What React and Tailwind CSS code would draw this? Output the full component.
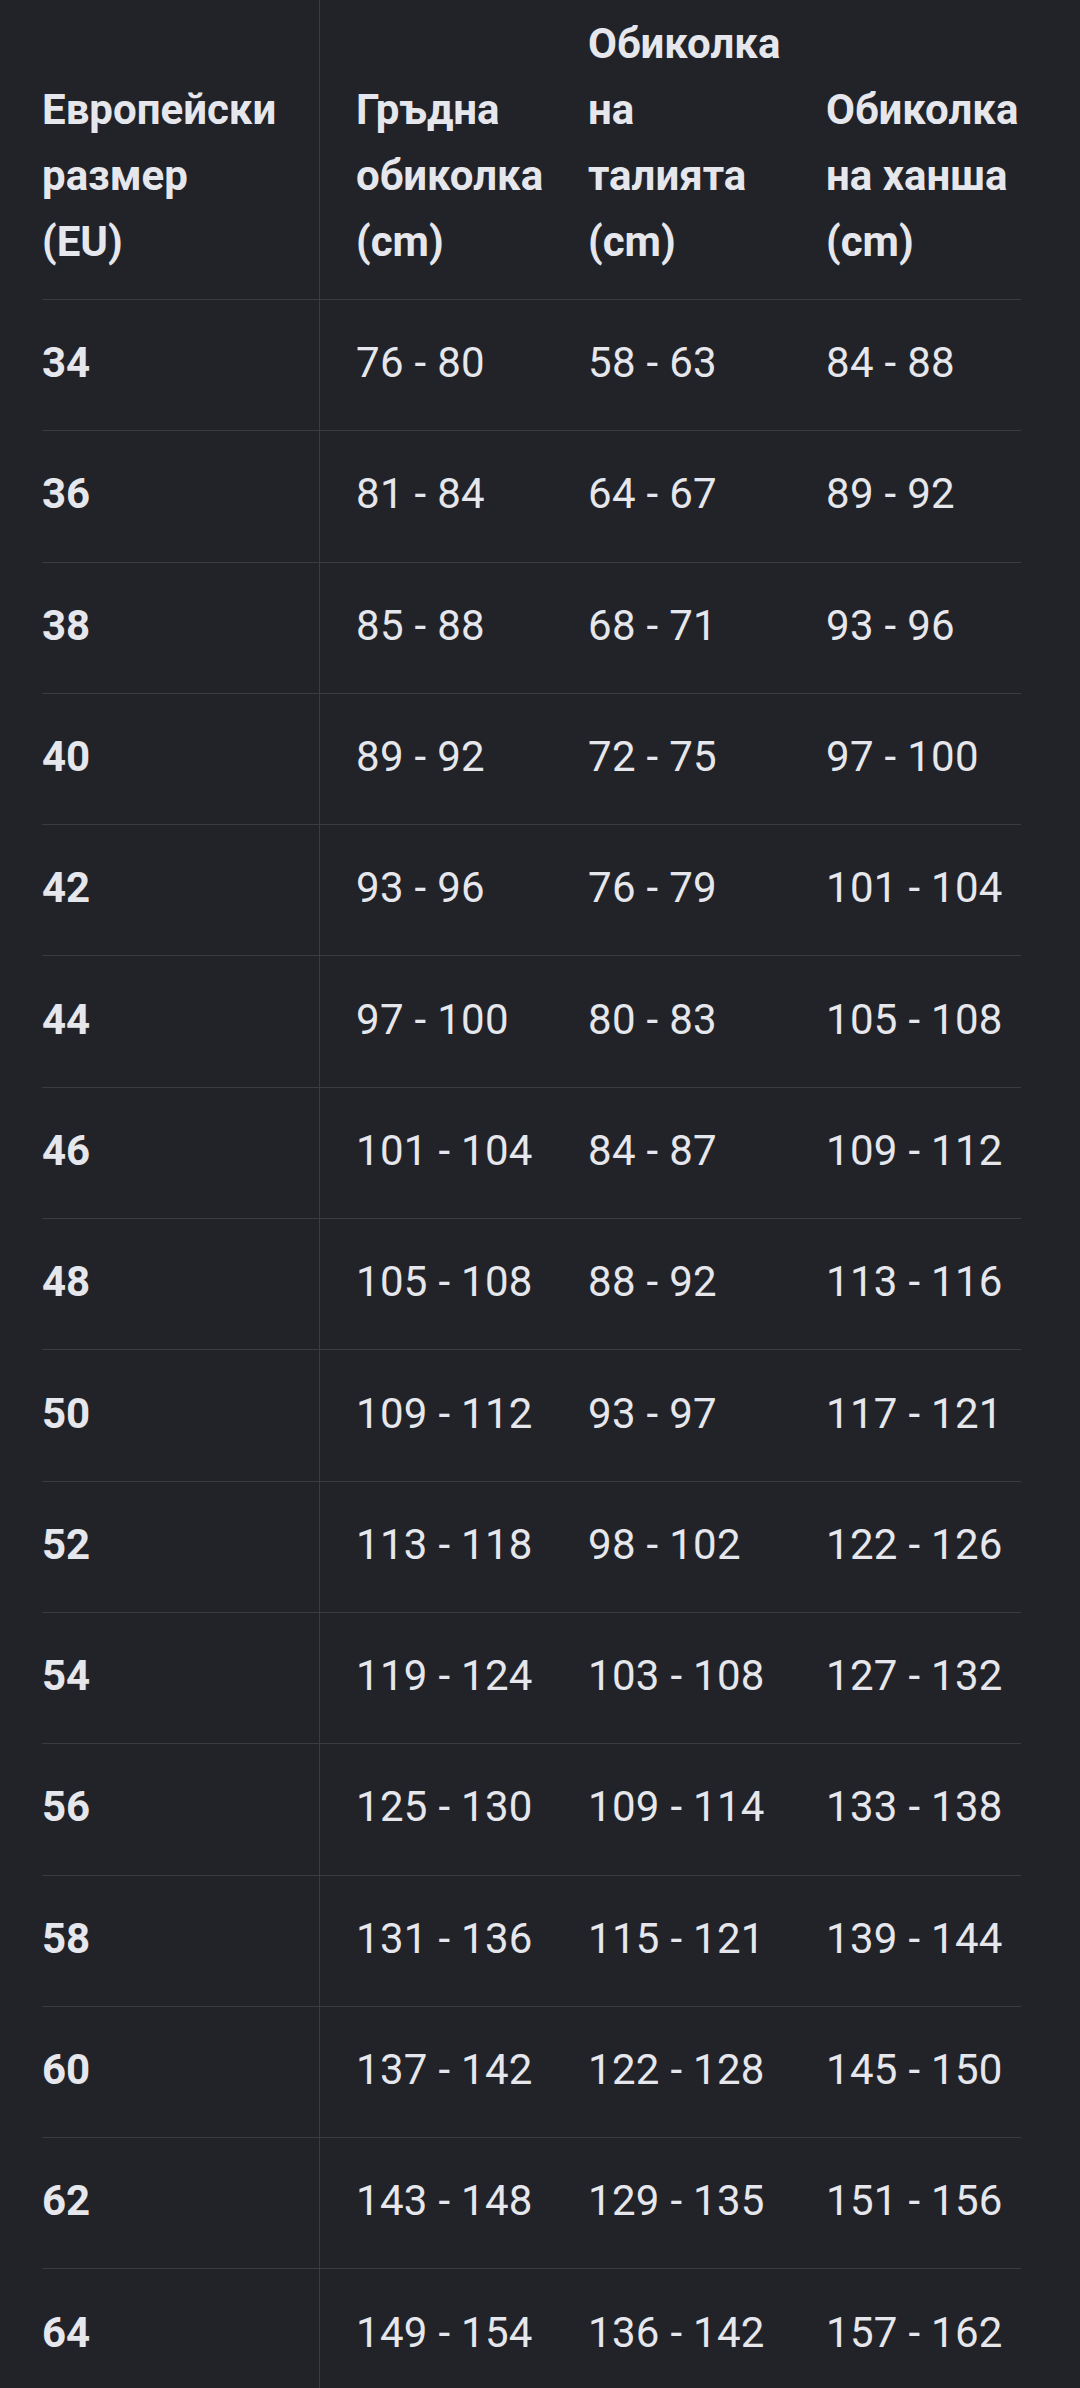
import React from 'react';

const rows = [
  ['34', '76 - 80', '58 - 63', '84 - 88'],
  ['36', '81 - 84', '64 - 67', '89 - 92'],
  ['38', '85 - 88', '68 - 71', '93 - 96'],
  ['40', '89 - 92', '72 - 75', '97 - 100'],
  ['42', '93 - 96', '76 - 79', '101 - 104'],
  ['44', '97 - 100', '80 - 83', '105 - 108'],
  ['46', '101 - 104', '84 - 87', '109 - 112'],
  ['48', '105 - 108', '88 - 92', '113 - 116'],
  ['50', '109 - 112', '93 - 97', '117 - 121'],
  ['52', '113 - 118', '98 - 102', '122 - 126'],
  ['54', '119 - 124', '103 - 108', '127 - 132'],
  ['56', '125 - 130', '109 - 114', '133 - 138'],
  ['58', '131 - 136', '115 - 121', '139 - 144'],
  ['60', '137 - 142', '122 - 128', '145 - 150'],
  ['62', '143 - 148', '129 - 135', '151 - 156'],
  ['64', '149 - 154', '136 - 142', '157 - 162'],
];

const headers = [
  ['Европейски', 'размер', '(EU)'],
  ['Гръдна', 'обиколка', '(cm)'],
  ['Обиколка', 'на', 'талията', '(cm)'],
  ['Обиколка', 'на ханша', '(cm)'],
];

const cols = 'grid grid-cols-[278px_232px_238px_231px]';

export default function App() {
  return (
    <div
      className="w-[1080px] h-[2388px] overflow-hidden bg-[#212328] text-[#e6e7ec]"
      style={{ fontFamily: 'Roboto, "Noto Sans", sans-serif' }}
    >
      <div className="ml-[42px] w-[979px]">
        {/* header */}
        <div className={`${cols} h-[300px] border-b border-[#3a3c41]`}>
          {headers.map((lines, i) => (
            <div
              key={i}
              className={`flex flex-col justify-end pb-[24px] text-[42px] leading-[66px] font-bold ${
                i === 0 ? 'border-r border-[#3a3c41]' : 'pl-[36px]'
              }`}
            >
              {lines.map((l, j) => (
                <div key={j} className="whitespace-nowrap">{l}</div>
              ))}
            </div>
          ))}
        </div>

        {/* body */}
        {rows.map((r, i) => (
          <div key={i} className={`${cols} h-[131.3px] border-b border-[#3a3c41]`}>
            <div className="flex items-center pb-[5px] border-r border-[#3a3c41] text-[42px] font-bold">{r[0]}</div>
            {r.slice(1).map((v, j) => (
              <div key={j} className="flex items-center pb-[5px] pl-[36px] text-[42px] whitespace-nowrap tracking-[0.3px]">
                {v}
              </div>
            ))}
          </div>
        ))}
      </div>
    </div>
  );
}
